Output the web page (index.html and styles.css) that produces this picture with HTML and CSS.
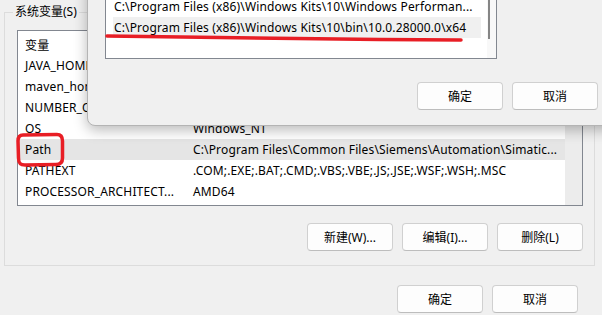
FILE: index.html
```html
<!DOCTYPE html>
<html lang="zh-CN">
<head>
  <meta charset="UTF-8" />
  <title>系统变量</title>
  <link rel="stylesheet" href="styles.css">
</head>
<body>

  <div class="window">
    <!-- System variables group -->
    <div class="group">
      <span class="group-title">系统变量(S)</span>

      <div class="listview">
        <div class="list-body">
          <div class="row header"><span class="col-name">变量</span><span class="col-value">值</span></div>
          <div class="row"><span class="col-name">JAVA_HOME</span><span class="col-value">C:\Program Files\Java\jdk1.8.0_202</span></div>
          <div class="row"><span class="col-name">maven_home</span><span class="col-value">D:\apache-maven-3.6.3</span></div>
          <div class="row"><span class="col-name">NUMBER_OF_PROCESSORS</span><span class="col-value">16</span></div>
          <div class="row"><span class="col-name">OS</span><span class="col-value">Windows_NT</span></div>
          <div class="row selected"><span class="col-name">Path</span><span class="col-value">C:\Program Files\Common Files\Siemens\Automation\Simatic...</span></div>
          <div class="row"><span class="col-name">PATHEXT</span><span class="col-value">.COM;.EXE;.BAT;.CMD;.VBS;.VBE;.JS;.JSE;.WSF;.WSH;.MSC</span></div>
          <div class="row"><span class="col-name">PROCESSOR_ARCHITECT...</span><span class="col-value">AMD64</span></div>
        </div>
        <div class="scroll-track"></div>
      </div>

      <div class="button-row list-buttons">
        <button class="btn">新建(W)...</button>
        <button class="btn">编辑(I)...</button>
        <button class="btn">删除(L)</button>
      </div>
    </div>

    <div class="button-row footer">
      <button class="btn">确定</button>
      <button class="btn">取消</button>
    </div>

    <!-- Edit environment variable dialog (on top) -->
    <div class="dialog">
      <div class="path-list">
        <div class="path-items">
          <div class="path-item">C:\Program Files (x86)\Windows Kits\10\Windows Performan...</div>
          <div class="path-item selected">C:\Program Files (x86)\Windows Kits\10\bin\10.0.28000.0\x64</div>
        </div>
        <div class="path-scroll"><div class="thumb"></div></div>
      </div>
      <div class="button-row dialog-buttons">
        <button class="btn">确定</button>
        <button class="btn">取消</button>
      </div>
    </div>

    <!-- Red hand-drawn markers -->
    <svg class="mark mark-line" width="370" height="12" viewBox="0 0 370 12">
      <path d="M2 3 C 90 5, 230 6.5, 356 7" />
    </svg>
    <svg class="mark mark-box" width="54" height="36" viewBox="0 0 54 36">
      <path d="M8 3 L 42 2.5 C 46 2.5, 47.5 4.5, 47.5 9 L 47.5 26 C 47.5 30.5, 45.5 32.5, 41 32.5 L 10 33 C 5 33, 3.5 31, 3.5 26 L 3 9 C 3 5, 4.5 3, 8 3 Z" />
    </svg>
  </div>

</body>
</html>
```

FILE: styles.css
```css
:root {
  --bg: #f0f0f0;
  --border: #dcdcdc;
  --list-border: #828790;
  --red: #e81e25;
}

body {
  margin: 0;
  background: var(--bg);
  font-family: 'Noto Sans', 'Noto Sans CJK SC', sans-serif;
  font-size: 12px;
  letter-spacing: 0.15px;
  color: #000;
}

.window {
  position: relative;
  width: 602px;
  height: 315px;
  overflow: hidden;
}

/* group box */
.group {
  margin: 12px 7px 0 4px;
  height: 254px;
  border: 1px solid var(--border);
  position: relative;
  box-sizing: border-box;
  padding: 17px 11px 0 12px;
}

.group-title {
  position: absolute;
  top: -8px;
  left: 8px;
  padding: 0 2px;
  background: var(--bg);
  line-height: 14px;
  letter-spacing: 0;
}

.listview {
  display: flex;
  height: 176px;
  border: 1px solid var(--list-border);
  background: #fff;
  box-sizing: border-box;
}

.list-body {
  flex: 1;
  padding-top: 3px;
}

.scroll-track {
  width: 17px;
  background: #ececec;
}

.row {
  display: flex;
  height: 21px;
  align-items: center;
  white-space: nowrap;
}

.row.selected {
  background: #e5e5e5;
}

.col-name {
  width: 168px;
  padding-left: 7px;
  box-sizing: border-box;
  overflow: hidden;
}

.col-value {
  flex: 1;
  padding-left: 7px;
  overflow: hidden;
}

/* buttons */
.button-row {
  display: flex;
  justify-content: flex-end;
  gap: 9px;
}

.btn {
  width: 86px;
  height: 28px;
  font-family: inherit;
  font-size: 12px;
  color: #000;
  background: #fdfdfd;
  border: 1px solid #d0d0d0;
  border-bottom-color: #bdbdbd;
  border-radius: 4px;
  padding: 0;
}

.list-buttons {
  margin-top: 17px;
}

.footer {
  margin-top: 19px;
  padding-right: 24px;
}

/* overlay dialog */
.dialog {
  position: absolute;
  top: -20px;
  left: 87px;
  width: 540px;
  height: 146px;
  background: #f0f0f0;
  border: 1px solid #b4b4b4;
  border-radius: 8px;
  box-shadow: 0 4px 14px rgba(0, 0, 0, 0.28);
  box-sizing: border-box;
  padding: 0 0 0 17px;
}

.path-list {
  display: flex;
  width: 392px;
  height: 78px;
  background: #fff;
  border: 1px solid #828790;
  border-top: none;
  box-sizing: border-box;
}

.path-items {
  flex: 1;
  padding: 15px 0 0 7px;
}

.path-item {
  height: 21px;
  line-height: 21px;
  padding-left: 1px;
  white-space: nowrap;
}

.path-item.selected {
  background: #f0f0f0;
  margin-right: 6px;
}

.path-scroll {
  width: 9px;
  background: #f8f8f8;
  position: relative;
}

.thumb {
  position: absolute;
  left: 1px;
  top: 0;
  width: 2px;
  height: 58px;
  background: #858585;
}

.dialog-buttons {
  justify-content: flex-start;
  margin-top: 23px;
  padding-left: 312px;
}

/* red marks */
.mark {
  position: absolute;
  fill: none;
  stroke: var(--red);
  stroke-width: 3.5;
  stroke-linecap: round;
  stroke-linejoin: round;
}

.mark-line {
  left: 105px;
  top: 33px;
}

.mark-box {
  left: 15px;
  top: 132px;
}
```
